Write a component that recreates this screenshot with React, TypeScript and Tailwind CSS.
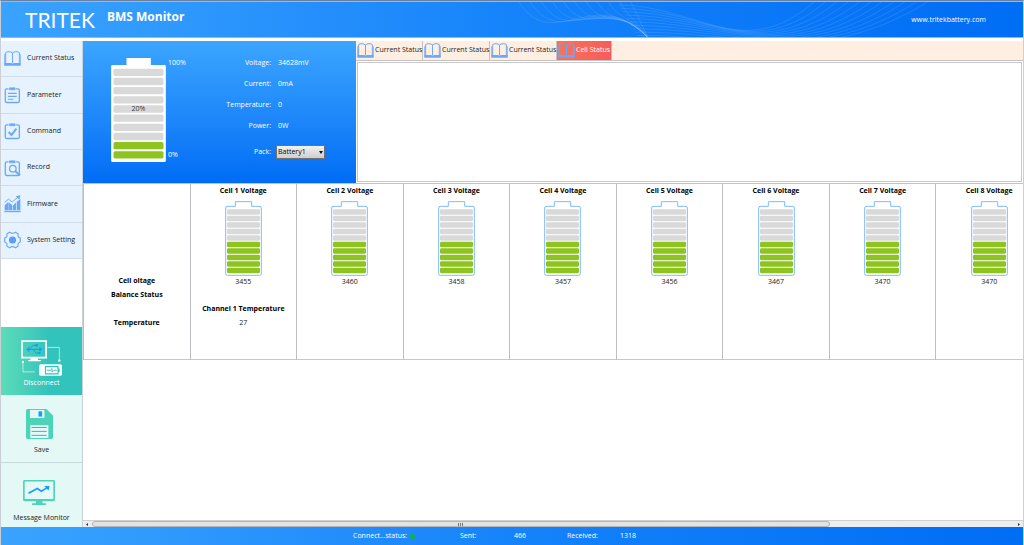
import type { ReactNode } from "react";
import clsx from "clsx";

const BookIcon = ({ className }: { className?: string }) => (
  <svg viewBox="0 0 52 46" className={className} fill="none" stroke="#6aa8f8" strokeWidth="3">
    <path d="M26 6C21 1 9 1 5 5V38M26 6C31 1 43 1 47 5V38M26 6V38" />
    <path d="M2 10V42M50 10V42" strokeWidth="2.5" />
    <path d="M1 37H20C23 37 24 39 26 39S29 37 32 37H51V45H1Z" fill="#6aa8f8" stroke="none" />
  </svg>
);

const Clipboard = ({ children }: { children: ReactNode }) => (
  <svg viewBox="0 0 52 54" className="h-[18px] w-[17px] shrink-0" fill="none" stroke="#6aa8f8" strokeWidth="4">
    <path d="M14 8H8Q4 8 4 13V45Q4 50 9 50H42Q47 50 47 45V13Q47 8 43 8H37" />
    <path d="M17 5H34V11H17Z" fill="#6aa8f8" strokeWidth="2" />
    {children}
  </svg>
);

const ParameterIcon = () => (
  <Clipboard>
    <path d="M12 22H39M12 31H39M12 40H29" strokeWidth="3.5" />
  </Clipboard>
);

const CommandIcon = () => (
  <Clipboard>
    <path d="M14 30L23 39L38 20" strokeWidth="6" />
  </Clipboard>
);

const RecordIcon = () => (
  <Clipboard>
    <circle cx="27" cy="29" r="10" />
    <path d="M34 36L49 49" strokeWidth="6" />
  </Clipboard>
);

const FirmwareIcon = () => (
  <svg viewBox="0 0 52 54" className="h-[18px] w-[17px] shrink-0" fill="#6aa8f8">
    <path d="M2 31L13 21V46H2ZM14 22L25 30V46H14ZM27 32L37 22V46H27ZM39 20L50 12V46H39Z" />
    <path d="M1 48H51V52H1Z" />
    <path d="M2 22L14 12L25 21L44 5" fill="none" stroke="#6aa8f8" strokeWidth="3" />
    <path d="M36 3L50 0L47 14Z" />
  </svg>
);

const SettingIcon = () => (
  <svg viewBox="0 0 52 54" className="h-[18px] w-[17px] shrink-0" fill="none" stroke="#6aa8f8" strokeWidth="3.5">
    <path d="M17 3Q26 10 35 3L43 8Q41 18 50 21V33Q41 36 43 46L35 51Q26 44 17 51L9 46Q11 36 2 33V21Q11 18 9 8Z" strokeLinejoin="round" />
    <circle cx="26" cy="27" r="11" fill="#5b9dfb" stroke="none" />
  </svg>
);

const DisconnectIcon = () => (
  <svg viewBox="0 0 124 108" className="h-9 w-[41px]" fill="none">
    <path d="M3 3H76V53H3Z" stroke="#fff" strokeWidth="5" />
    <path d="M30 54H50L52 60H60V64H22V60H28Z" fill="#fff" />
    <path d="M18 28H62M26 28L36 16H44M36 28L46 39H54" stroke="#179bf5" strokeWidth="3" />
    <path d="M25 20V36L16 28ZM56 21L65 28L56 35Z" fill="#179bf5" />
    <path d="M44 12H51V19H44ZM53 36H59V42H53Z" fill="#179bf5" />
    <path d="M80 22H116V62M6 68V96H42" stroke="#e6faf5" strokeWidth="2" />
    <circle cx="116" cy="62" r="3.5" fill="#fff" />
    <circle cx="6" cy="66" r="3.5" fill="#fff" />
    <rect x="55" y="73" width="69" height="35" rx="5" fill="#fff" />
    <path d="M74 80H112V102H74ZM115 86V96" stroke="#31c3bc" strokeWidth="3.5" />
    <path d="M78 91H89L94 86V97L100 91H108" stroke="#31c3bc" strokeWidth="3" />
  </svg>
);

const SaveIcon = () => (
  <svg viewBox="0 0 82 91" className="mr-[5px] h-[30px] w-[27px]">
    <path d="M5 0H62L82 20V86Q82 91 77 91H5Q0 91 0 86V5Q0 0 5 0Z" fill="#4dd4b8" />
    <rect x="12" y="3" width="44" height="24" rx="2" fill="#e4f9f6" />
    <rect x="38" y="7" width="11" height="16" fill="#179bff" />
    <rect x="13" y="49" width="55" height="39" fill="#e4f9f6" />
    <path d="M17 56H63M17 68H63M17 80H63" stroke="#3fa9f5" strokeWidth="3" />
  </svg>
);

const MonitorIcon = () => (
  <svg viewBox="0 0 96 76" className="mr-[5px] h-[25px] w-8">
    <rect x="2" y="2" width="92" height="60" rx="3" fill="#e4f9f6" stroke="#4dd4b8" strokeWidth="5" />
    <path d="M2 58H94V62H2ZM40 62H57L59 71H69V76H27V71H38Z" fill="#4dd4b8" />
    <path d="M16 40L43 26L55 34L72 24" fill="none" stroke="#179bff" strokeWidth="5" />
    <path d="M64 18H80L77 32Z" fill="#179bff" />
  </svg>
);

// blends two sets of curve points into one cubic path
const blend = (from: number[], to: number[], t: number) => {
  const p = from.map((v, i) => v + (to[i] - v) * t);
  return `M${p[0]} ${p[1]}C${p[2]} ${p[3]} ${p[4]} ${p[5]} ${p[6]} ${p[7]}`;
};

const steps = Array.from({ length: 11 }, (_, i) => i / 10);

const Waves = () => (
  <svg viewBox="0 0 440 36" className="absolute top-0 right-[74px] h-9 w-[440px]" fill="none" stroke="#8cc4ff" strokeOpacity="0.2">
    {steps.map((t) => (
      <path key={`l${t}`} d={blend([10, 0, 45, 54, 85, -22, 140, 37], [122, 0, 127, 10, 132, 22, 140, 37], t)} />
    ))}
    {steps.map((t) => (
      <path key={`r${t}`} d={blend([110, 3, 190, 4, 235, 62, 306, -1], [130, 37, 240, 36, 320, 62, 420, -1], t)} />
    ))}
  </svg>
);

const LargeBattery = () => (
  <svg viewBox="0 0 164 312" className="h-[104px] w-[55px]">
    <path d="M46 0H119V21H160Q164 21 164 25V308Q164 312 160 312H4Q0 312 0 308V25Q0 21 4 21H46Z" fill="#fff" />
    {Array.from({ length: 10 }, (_, i) => (
      <rect key={i} x="7" y={32 + i * 27.5} width="150" height="22" rx="5" fill={i < 8 ? "#d9d9d9" : "#8fc31f"} />
    ))}
  </svg>
);

const CellBattery = () => (
  <svg viewBox="0 0 111 225" className="mx-auto block h-[75px] w-[37px]">
    <path
      d="M31 2H80V16H105Q109 16 109 21V218Q109 223 104 223H7Q2 223 2 218V21Q2 16 6 16H31Z"
      fill="#fff"
      stroke="#7fbcfa"
      strokeWidth="3"
    />
    {Array.from({ length: 10 }, (_, i) => (
      <rect key={i} x="6" y={25 + i * 19.5} width="99" height="16" rx="4" fill={i < 5 ? "#d9d9d9" : "#8fc31f"} />
    ))}
  </svg>
);

const navItems = [
  { label: "Current Status", icon: <BookIcon className="h-[15px] w-[17px] shrink-0" /> },
  { label: "Parameter", icon: <ParameterIcon /> },
  { label: "Command", icon: <CommandIcon /> },
  { label: "Record", icon: <RecordIcon /> },
  { label: "Firmware", icon: <FirmwareIcon /> },
  { label: "System Setting", icon: <SettingIcon /> },
];

const readings = [
  ["Voltage:", "34628mV"],
  ["Current:", "0mA"],
  ["Temperature:", "0"],
  ["Power:", "0W"],
];

const tabs = ["Current Status", "Current Status", "Current Status", "Cell Status"];

const cells = [3455, 3460, 3458, 3457, 3456, 3467, 3470, 3470];

const Header = () => (
  <header className="relative flex h-[37px] items-start overflow-hidden border-y border-[#7fbdfb] bg-linear-to-r from-[#3aa3ff] via-[#1583fa] to-[#006df5] text-white">
    <Waves />
    <div className="pt-1 pl-6 font-[Lato] text-[21px] leading-7">TRITEK</div>
    <h1 className="pt-[5px] pl-3 text-[12px] leading-5 font-bold">BMS Monitor</h1>
    <a href="http://www.tritekbattery.com" className="relative mr-[37px] ml-auto pt-3 leading-3">
      www.tritekbattery.com
    </a>
  </header>
);

const Sidebar = () => (
  <aside className="flex w-[82px] shrink-0 flex-col justify-between border-r border-[#c9d3dc]">
    <nav className="flex h-[218px] flex-col">
      {navItems.map((item) => (
        <button
          key={item.label}
          className="flex w-full flex-1 items-center gap-[6px] border-b border-[#cfdde6] bg-[#e6f3fe] pl-[3px] text-left whitespace-nowrap"
        >
          {item.icon}
          {item.label}
        </button>
      ))}
    </nav>
    <div>
      <button className="flex h-[68px] w-full flex-col items-center justify-end gap-[2px] bg-linear-to-r from-[#5cdcb8] to-[#31c3bc] to-60% pb-2 leading-[9px] text-white">
        <DisconnectIcon />
        Disconnect
      </button>
      <button className="flex h-[68px] w-full flex-col items-center justify-end gap-[6px] border-b border-[#c5d8d8] bg-[#e4f9f6] pb-2 leading-[9px]">
        <SaveIcon />
        Save
      </button>
      <button className="flex h-16 w-full flex-col items-center justify-end gap-2 bg-[#e4f9f6] pb-[5px] leading-[9px]">
        <MonitorIcon />
        Message Monitor
      </button>
    </div>
  </aside>
);

const PackPanel = () => (
  <section className="flex w-[273px] shrink-0 items-start bg-linear-to-b from-[#3ba5ff] to-[#006cf5] pt-[17px] pl-7 text-white">
    <div className="relative">
      <LargeBattery />
      <span className="absolute inset-x-0 top-[46px] text-center leading-[10px] text-[#333]">20%</span>
    </div>
    <div className="flex h-[102px] w-10 flex-col justify-between pl-[2px] leading-[10px]">
      <span>100%</span>
      <span>0%</span>
    </div>
    <div className="-mt-[6px] flex-1">
      <dl className="grid grid-cols-[65px_1fr] gap-x-[7px] leading-[21px]">
        {readings.map(([label, value]) => (
          <div key={label} className="contents">
            <dt className="text-right">{label}</dt>
            <dd>{value}</dd>
          </div>
        ))}
      </dl>
      <div className="grid grid-cols-[65px_49px] items-center gap-x-[5px] pt-[9px]">
        <label htmlFor="pack" className="text-right">
          Pack:
        </label>
        <div className="relative">
          <select
            id="pack"
            className="block h-[14px] w-full appearance-none border border-[#707070] bg-linear-to-b from-[#f2f2f2] to-[#cfcfcf] pl-px leading-[12px] text-black"
          >
            <option>Battery1</option>
          </select>
          <svg viewBox="0 0 8 6" className="pointer-events-none absolute top-[6px] right-[2px] h-[3px] w-[4px]">
            <path d="M0 0H8L4 6Z" fill="#111" />
          </svg>
        </div>
      </div>
    </div>
  </section>
);

const StatusPanel = () => (
  <section className="flex min-w-0 flex-1 flex-col">
    <div role="tablist" className="flex h-5 border-b border-[#c6c2c0] bg-[#ffeee2]">
      {tabs.map((tab, i) => {
        const active = i === tabs.length - 1;
        return (
          <button
            key={i}
            role="tab"
            aria-selected={active}
            className={clsx(
              "flex items-center gap-px border-r border-[#c6c2c0] pl-px",
              active ? "w-[55px] bg-linear-to-r from-[#fa7257] to-[#f45c5c] text-white" : "w-[67px]",
            )}
          >
            <BookIcon className="h-[15px] w-[17px] shrink-0" />
            <span className="whitespace-nowrap">{tab}</span>
          </button>
        );
      })}
    </div>
    <div role="tabpanel" className="m-px flex-1 border border-[#c8c8cc] bg-white" />
  </section>
);

const CellTable = () => (
  <div className="min-h-0 flex-1 overflow-hidden border-t border-[#c4c4c8]">
    <table className="w-[960px] table-fixed border-collapse border-b border-[#c8c8c8] text-center leading-[14px] text-[#222]">
      <thead>
        <tr>
          <td className="border-x border-[#bdbdc2]" />
          {cells.map((_, i) => (
            <th key={i} scope="col" className="h-[14px] border-x border-[#bdbdc2] p-0 text-black">
              Cell {i + 1} Voltage
            </th>
          ))}
        </tr>
      </thead>
      <tbody>
        <tr>
          <th scope="row" className="border-x border-[#bdbdc2] p-0 align-bottom text-black">
            Cell oltage
          </th>
          {cells.map((value, i) => (
            <td key={i} className="border-x border-[#bdbdc2] p-0 pt-[3px]">
              <CellBattery />
              <div className="leading-3">{value}</div>
            </td>
          ))}
        </tr>
        <tr>
          <th scope="row" className="h-[14px] border-x border-[#bdbdc2] p-0 text-black">
            Balance Status
          </th>
          {cells.map((_, i) => (
            <td key={i} className="border-x border-[#bdbdc2] p-0" />
          ))}
        </tr>
        <tr>
          <th scope="row" className="h-[57px] border-x border-[#bdbdc2] p-0 pt-[14px] align-top text-black">
            Temperature
          </th>
          {cells.map((_, i) => (
            <td key={i} className="border-x border-[#bdbdc2] p-0 align-top">
              {i === 0 && (
                <>
                  <div className="font-bold text-black">Channel 1 Temperature</div>
                  <div>27</div>
                </>
              )}
            </td>
          ))}
        </tr>
      </tbody>
    </table>
  </div>
);

const ScrollBar = () => (
  <div className="flex h-[7px] items-center border-t border-[#d0d0d0] bg-[#ededed] px-[3px]">
    <svg viewBox="0 0 4 6" className="mr-1 h-[3px] w-[2px]">
      <path d="M4 0V6L0 3Z" fill="#333" />
    </svg>
    <div className="flex h-[6px] w-[79%] items-center justify-center gap-px rounded-sm border border-[#b5b5b5] bg-[#e3e3e3]">
      <span className="h-[3px] w-px bg-[#777]" />
      <span className="h-[3px] w-px bg-[#777]" />
      <span className="h-[3px] w-px bg-[#777]" />
    </div>
    <svg viewBox="0 0 4 6" className="ml-auto h-[3px] w-[2px]">
      <path d="M0 0V6L4 3Z" fill="#333" />
    </svg>
  </div>
);

const StatusBar = () => (
  <footer className="flex h-[18px] items-center bg-linear-to-r from-[#3aa3ff] via-[#1583fa] to-[#006df5] pl-[352px] text-white">
    <span className="w-[57px]">Connect...status:</span>
    <span className="mr-[45px] h-[5px] w-[5px] rounded-full bg-[#12b33c]" />
    <span className="w-[54px]">Sent:</span>
    <span className="w-[53px]">466</span>
    <span className="w-[53px]">Received:</span>
    <span>1318</span>
  </footer>
);

export default function App() {
  return (
    <div className="flex min-h-screen flex-col border-x border-t border-x-[#cdcfd6] border-t-[#6f7f99] bg-white font-['Open_Sans','Noto_Sans',sans-serif] text-[7px] text-[#222]">
      <Header />
      <div className="flex flex-1 pt-[3px]">
        <Sidebar />
        <main className="flex min-w-0 flex-1 flex-col">
          <div className="flex h-[142px]">
            <PackPanel />
            <StatusPanel />
          </div>
          <CellTable />
          <ScrollBar />
        </main>
      </div>
      <StatusBar />
    </div>
  );
}
